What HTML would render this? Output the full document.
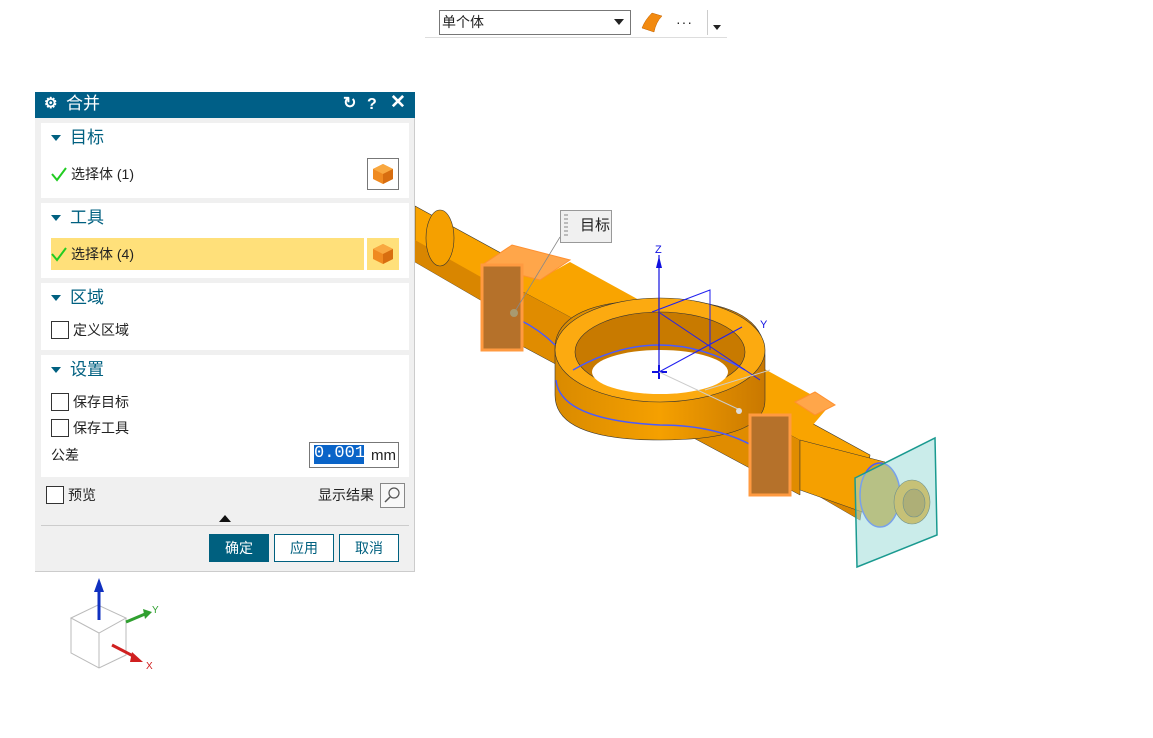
<!DOCTYPE html>
<html><head><meta charset="utf-8"><style>
body{margin:0;width:1153px;height:738px;background:#fff;position:relative;overflow:hidden;font-family:"Liberation Sans","Noto Sans CJK SC",sans-serif;font-size:14px;color:#222;line-height:18px}
.a{position:absolute}
.sec{position:absolute;left:41px;width:368px;background:#fff}
.hd{position:absolute;left:30px;font-size:17px;color:#006080;line-height:20px}
.tri{position:absolute;left:10px;width:0;height:0;border-left:5px solid transparent;border-right:5px solid transparent;border-top:6px solid #006080}
.cb{position:absolute;width:16px;height:16px;border:1px solid #333;background:#fff}
.btn{position:absolute;top:534px;height:26px;border:1px solid #00607f;background:#fff;color:#00607f;text-align:center;line-height:26px;font-size:14px}
</style></head><body>
<!-- top toolbar -->
<div class="a" style="left:425px;top:37px;width:302px;height:1px;background:#ddd"></div>
<div class="a" style="left:439px;top:10px;width:190px;height:23px;border:1px solid #777;background:#fff"></div>
<div class="a" style="left:442px;top:13px;font-size:14px">单个体</div>
<div class="a" style="left:614px;top:19px;border-left:5px solid transparent;border-right:5px solid transparent;border-top:6px solid #222"></div>
<svg class="a" style="left:640px;top:10px" width="24" height="24"><path d="M2 18 Q5 10 12 3 L22 6 Q16 12 14 22 Z" fill="#f28a10" stroke="#c06000" stroke-width="0.5"/></svg>
<div class="a" style="left:676px;top:13px;font-size:14px;letter-spacing:1px">···</div>
<div class="a" style="left:707px;top:10px;width:1px;height:25px;background:#ccc"></div>
<div class="a" style="left:713px;top:25px;border-left:4px solid transparent;border-right:4px solid transparent;border-top:5px solid #222"></div>

<!-- model -->
<svg class="a" style="left:0;top:0" width="1153" height="738">
<defs>
<linearGradient id="g1" x1="0" y1="0" x2="1" y2="0"><stop offset="0" stop-color="#d98a00"/><stop offset="0.5" stop-color="#f5a000"/><stop offset="1" stop-color="#c97800"/></linearGradient>
</defs>
<!-- beam -->
<polygon points="415,206 870,455 860,520 415,262" fill="#f9a400" stroke="#333" stroke-width="0.6"/>
<polygon points="415,240 860,490 860,520 415,262" fill="#d98600"/>
<polygon points="520,290 800,440 800,495 520,345" fill="#e08c00" stroke="#333" stroke-width="0.5"/>
<polygon points="520,290 570,262 830,405 800,440" fill="#f9a400"/>
<ellipse cx="440" cy="238" rx="14" ry="28" fill="#f5a000" stroke="#333" stroke-width="0.6"/>
<!-- ring body -->
<path d="M555 345 Q560 300 660 300 Q765 300 765 355 L765 400 Q765 440 660 440 Q555 440 555 395 Z" fill="url(#g1)" stroke="#333" stroke-width="0.6"/>
<ellipse cx="660" cy="350" rx="105" ry="52" fill="#fcaa10" stroke="#333" stroke-width="0.6"/>
<ellipse cx="660" cy="352" rx="85" ry="40" fill="#c87a00" stroke="#333" stroke-width="0.6"/>
<ellipse cx="660" cy="372" rx="68" ry="22" fill="#fff"/>
<path d="M573 370 Q660 320 745 370" fill="none" stroke="#4a5aff" stroke-width="1.5"/>
<path d="M556 380 Q560 420 660 425 Q720 425 760 450" fill="none" stroke="#4a5aff" stroke-width="1.5"/>
<path d="M520 320 Q540 330 555 345" fill="none" stroke="#4a5aff" stroke-width="1.5"/>
<!-- blocks -->
<polygon points="482,265 512,245 570,260 540,280" fill="#ffa64a" stroke="#ff9030"/>
<rect x="482" y="265" width="40" height="85" fill="#b5712a" stroke="#ff9a40" stroke-width="3"/>
<polygon points="795,402 815,392 835,405 815,415" fill="#ffa64a" stroke="#ff9030"/>
<rect x="750" y="415" width="40" height="80" fill="#b5712a" stroke="#ff9a40" stroke-width="3"/>
<!-- right shaft -->
<polygon points="800,440 885,462 885,520 800,490" fill="#f5a000" stroke="#333" stroke-width="0.5"/>
<ellipse cx="880" cy="495" rx="20" ry="32" fill="#d4a020" stroke="#4a5aff" stroke-width="1.5"/>
<ellipse cx="912" cy="502" rx="18" ry="22" fill="#f5a000" stroke="#333" stroke-width="0.6"/>
<ellipse cx="914" cy="503" rx="11" ry="14" fill="#c07800" stroke="#333" stroke-width="0.6"/>
<polygon points="855,478 935,438 937,535 857,567" fill="#9fdcd8" fill-opacity="0.55" stroke="#1a9a90" stroke-width="1.5"/>
<!-- csys -->
<line x1="659" y1="255" x2="659" y2="372" stroke="#1010e0" stroke-width="1.2"/>
<polygon points="656,268 659,256 662,268" fill="#1010e0"/>
<text x="655" y="253" font-size="11" fill="#1010e0" font-family="Liberation Sans">Z</text>
<path d="M652 372 H667 M659 365 V379" stroke="#1010e0" stroke-width="2"/>
<path d="M659 372 L742 327 M652 312 L710 290 L710 350 M660 313 L760 380" stroke="#2020f0" stroke-width="1" fill="none"/>
<text x="760" y="328" font-size="11" fill="#1010e0" font-family="Liberation Sans">Y</text>
<path d="M659 372 L740 410 M705 390 L770 370" stroke="#ccc" stroke-width="1" fill="none"/>
<circle cx="739" cy="411" r="3" fill="#ddd"/>
<line x1="514" y1="313" x2="560" y2="237" stroke="#888" stroke-width="0.8"/>
<circle cx="514" cy="313" r="4" fill="#a89a70"/>
<!-- small triad -->
<g stroke="#bbb" fill="none" stroke-width="1">
<polygon points="71,618 98,605 126,618 99,633"/>
<polyline points="71,618 71,653 99,668 126,655 126,618"/><line x1="99" y1="633" x2="99" y2="668"/>
</g>
<line x1="99" y1="620" x2="99" y2="590" stroke="#1030c0" stroke-width="3"/>
<polygon points="94,592 99,578 104,592" fill="#1030c0"/>
<line x1="126" y1="622" x2="145" y2="614" stroke="#30a030" stroke-width="3"/>
<polygon points="143,609 152,612 145,619" fill="#30a030"/>
<text x="152" y="613" font-size="10" fill="#30a030" font-family="Liberation Sans">Y</text>
<line x1="112" y1="645" x2="135" y2="657" stroke="#d02020" stroke-width="3"/>
<polygon points="132,652 143,662 130,662" fill="#d02020"/>
<text x="146" y="669" font-size="10" fill="#d02020" font-family="Liberation Sans">X</text>
</svg>
<div class="a" style="left:560px;top:210px;width:50px;height:31px;border:1px solid #999;background:#f0f0f0"></div>
<div class="a" style="left:564px;top:214px;width:4px;height:24px;background:repeating-linear-gradient(#bbb 0 2px,transparent 2px 4px)"></div>
<div class="a" style="left:580px;top:217px;font-size:15px">目标</div>

<!-- dialog -->
<div class="a" style="left:35px;top:92px;width:380px;height:480px;background:#f0f0f0;border-right:1px solid #ccc;border-bottom:1px solid #ccc;box-sizing:border-box"></div>
<div class="a" style="left:35px;top:92px;width:380px;height:26px;background:#005f87"></div>
<div class="a" style="left:44px;top:95px;color:#fff;font-size:15px;font-weight:bold">⚙</div>
<div class="a" style="left:66px;top:94px;color:#fff;font-size:17px;line-height:20px">合并</div>
<div class="a" style="left:343px;top:95px;color:#fff;font-size:16px;font-weight:bold">↻</div>
<div class="a" style="left:367px;top:96px;color:#fff;font-size:16px;font-weight:bold">?</div>
<div class="a" style="left:390px;top:94px;color:#fff;font-size:19px;font-weight:bold">✕</div>

<div class="sec" style="top:123px;height:75px"></div>
<div class="tri" style="left:51px;top:135px"></div><div class="hd" style="left:70px;top:128px">目标</div>
<svg class="a" style="left:51px;top:166px" width="16" height="16"><path d="M1 8 L6 14 L15 2" fill="none" stroke="#2c2" stroke-width="2"/></svg>
<div class="a" style="left:71px;top:165px">选择体 (1)</div>
<div class="a" style="left:367px;top:158px;width:30px;height:30px;border:1px solid #777;background:#fff"></div>
<svg class="a" style="left:372px;top:163px" width="22" height="22"><polygon points="11,1 21,6 21,16 11,21 1,16 1,6" fill="#f08a20"/><polygon points="11,1 21,6 11,11 1,6" fill="#f9a840"/><polygon points="11,11 21,6 21,16 11,21" fill="#d86e10"/></svg>

<div class="sec" style="top:203px;height:75px"></div>
<div class="tri" style="left:51px;top:215px"></div><div class="hd" style="left:70px;top:208px">工具</div>
<div class="a" style="left:51px;top:238px;width:313px;height:32px;background:#ffe07a"></div>
<div class="a" style="left:367px;top:238px;width:32px;height:32px;background:#ffe07a"></div>
<svg class="a" style="left:51px;top:246px" width="16" height="16"><path d="M1 8 L6 14 L15 2" fill="none" stroke="#2c2" stroke-width="2"/></svg>
<div class="a" style="left:71px;top:245px">选择体 (4)</div>
<svg class="a" style="left:372px;top:243px" width="22" height="22"><polygon points="11,1 21,6 21,16 11,21 1,16 1,6" fill="#f08a20"/><polygon points="11,1 21,6 11,11 1,6" fill="#f9a840"/><polygon points="11,11 21,6 21,16 11,21" fill="#d86e10"/></svg>

<div class="sec" style="top:283px;height:67px"></div>
<div class="tri" style="left:51px;top:295px"></div><div class="hd" style="left:70px;top:288px">区域</div>
<div class="cb" style="left:51px;top:321px"></div><div class="a" style="left:73px;top:321px">定义区域</div>

<div class="sec" style="top:355px;height:122px"></div>
<div class="tri" style="left:51px;top:367px"></div><div class="hd" style="left:70px;top:360px">设置</div>
<div class="cb" style="left:51px;top:393px"></div><div class="a" style="left:73px;top:393px">保存目标</div>
<div class="cb" style="left:51px;top:419px"></div><div class="a" style="left:73px;top:419px">保存工具</div>
<div class="a" style="left:51px;top:446px">公差</div>
<div class="a" style="left:309px;top:442px;width:88px;height:24px;border:1px solid #777;background:#fff"></div>
<div class="a" style="left:314px;top:445px;width:50px;height:19px;background:#0a64c8"></div>
<div class="a" style="left:314px;top:445px;color:#fff;font-size:17px;font-family:'Liberation Mono',monospace">0.001</div>
<div class="a" style="left:371px;top:447px;font-size:15px">mm</div>

<div class="cb" style="left:46px;top:486px"></div><div class="a" style="left:68px;top:486px">预览</div>
<div class="a" style="left:318px;top:486px">显示结果</div>
<div class="a" style="left:380px;top:483px;width:23px;height:23px;border:1px solid #888;background:#f8f8f8"></div>
<svg class="a" style="left:383px;top:486px" width="18" height="18"><circle cx="11" cy="7" r="5" fill="none" stroke="#555" stroke-width="1.2"/><line x1="7" y1="11" x2="2" y2="16" stroke="#555" stroke-width="1.5"/></svg>
<div class="a" style="left:219px;top:515px;border-left:6px solid transparent;border-right:6px solid transparent;border-bottom:7px solid #111"></div>
<div class="a" style="left:41px;top:525px;width:368px;height:1px;background:#ccc"></div>
<div class="btn" style="left:209px;width:58px;background:#00607f;color:#fff">确定</div>
<div class="btn" style="left:274px;width:58px">应用</div>
<div class="btn" style="left:339px;width:58px">取消</div>
</body></html>
